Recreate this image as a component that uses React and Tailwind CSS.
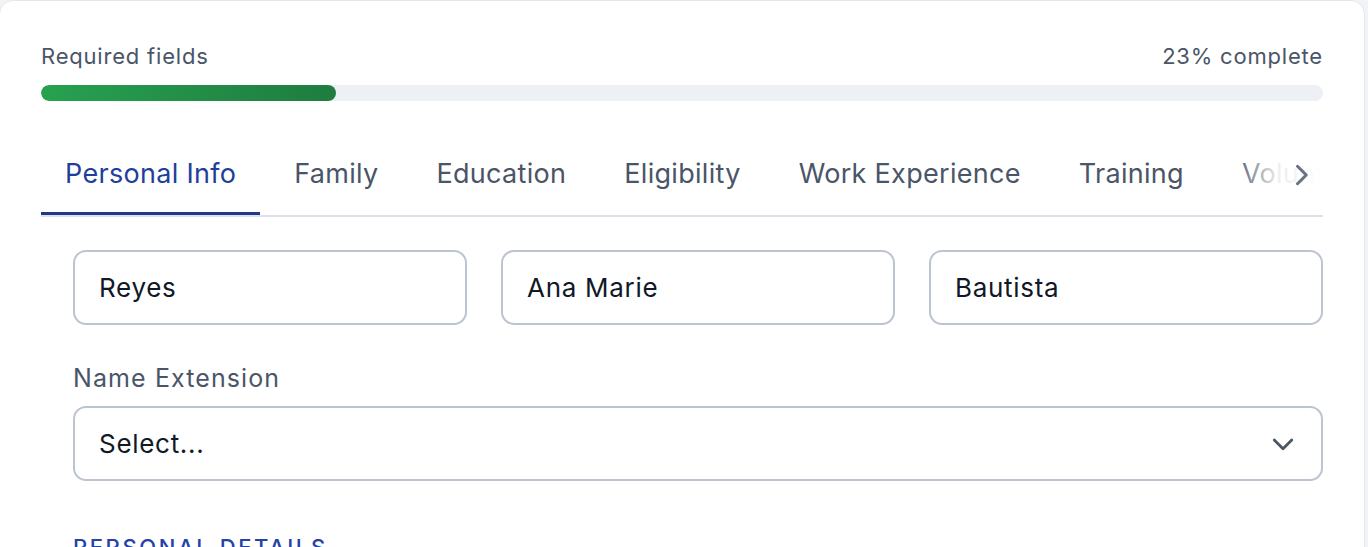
import React from "react";

const tabs = ["Personal Info", "Family", "Education", "Eligibility", "Work Experience", "Training", "Voluntary Work", "Other Info"];

export default function App() {
  return (
    <div className="min-h-[547px] w-[1368px] bg-[#f1f3f6] overflow-hidden" style={{ fontFamily: "Inter, 'Noto Sans', sans-serif" }}>
      <div className="w-[1366px] -ml-[1px] h-[600px] bg-white border border-[#e3e7ec] rounded-[14px] pl-[41px] pr-[41px] pt-[39px]">
        <div className="flex items-center justify-between h-[32px] text-[22px] text-[#4a5568] tracking-[0.8px]">
          <span>Required fields</span>
          <span>23% complete</span>
        </div>
        <div className="mt-[13px] h-[16px] w-full rounded-full bg-[#edf1f5] overflow-hidden">
          <div className="h-full w-[23%] rounded-full bg-gradient-to-r from-[#27a150] to-[#1e7d3f]"></div>
        </div>
        <div className="relative mt-[30px] border-b-2 border-[#dde2e9]">
          <div className="flex gap-[10px] overflow-hidden whitespace-nowrap">
            {tabs.map((t, i) => (
              <div
                key={t}
                className={
                  i === 0
                    ? "shrink-0 px-[24px] h-[84px] pt-[6px] flex items-center text-[27px] tracking-[0.3px] text-[#213f9a] border-b-[3px] border-[#22398a]"
                    : "shrink-0 px-[24px] h-[84px] pt-[6px] flex items-center text-[27px] tracking-[0.3px] text-[#4a5568] border-b-[3px] border-transparent"
                }
              >
                {t}
              </div>
            ))}
          </div>
          <div className="absolute right-0 top-0 h-[81px] w-[90px] pt-[6px] flex items-center justify-end bg-gradient-to-r from-white/0 via-white/90 to-white">
            <svg width="28" height="28" viewBox="0 0 24 24" fill="none" stroke="#6b7280" strokeWidth="2.6" strokeLinecap="round" strokeLinejoin="round" className="mr-[8px]">
              <path d="M9 4.5l7.5 7.5-7.5 7.5" />
            </svg>
          </div>
        </div>
        <div className="pl-[32px]">
          <div className="mt-[33px] grid grid-cols-3 gap-[34px]">
            {["Reyes", "Ana Marie", "Bautista"].map((v) => (
              <div key={v} className="h-[75px] rounded-[13px] border-2 border-[#bcc4d0] flex items-center pl-[24px] pr-[24px] text-[26px] tracking-[0.7px] text-[#111827]">
                {v}
              </div>
            ))}
          </div>
          <div className="mt-[37px] text-[25px] tracking-[1.1px] text-[#4a5568] leading-[32px]">Name Extension</div>
          <div className="mt-[12px] h-[75px] rounded-[13px] border-2 border-[#bcc4d0] flex items-center justify-between pl-[24px] pr-[24px] text-[26px] tracking-[0.7px] text-[#111827]">
            <span>Select...</span>
            <svg width="28" height="28" viewBox="0 0 24 24" fill="none" stroke="#4b5563" strokeWidth="2.4" strokeLinecap="round" strokeLinejoin="round">
              <path d="M4.5 8.5L12 16l7.5-7.5" />
            </svg>
          </div>
          <div className="mt-[50px] text-[22px] font-medium text-[#2442a8] uppercase tracking-[2.6px]">Personal Details</div>
        </div>
      </div>
    </div>
  );
}
